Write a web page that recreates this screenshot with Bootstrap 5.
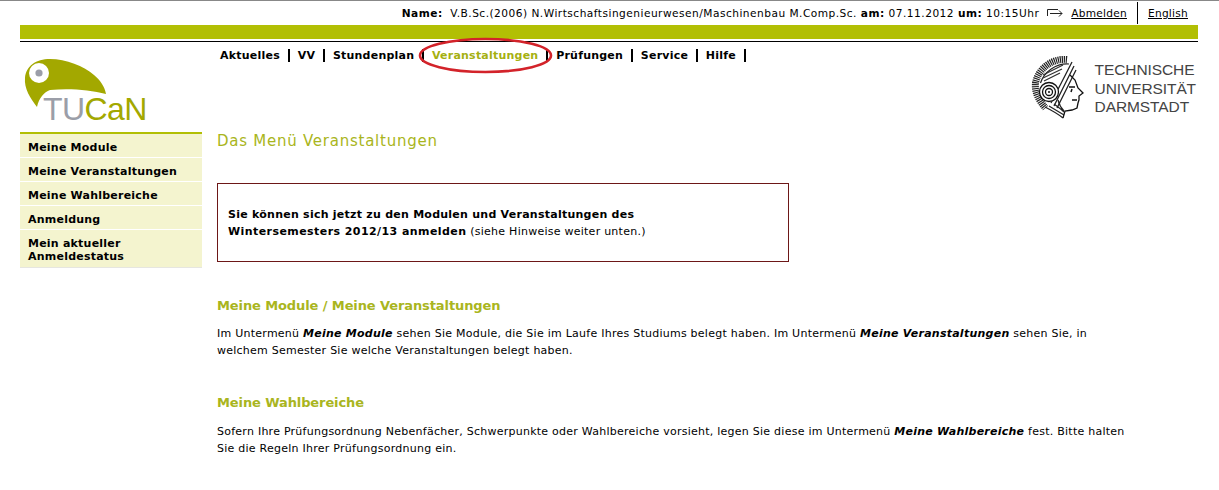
<!DOCTYPE html>
<html lang="de">
<head>
  <meta charset="UTF-8" />
  <meta name="viewport" content="width=device-width, initial-scale=1.0"/>
  <title>TUCaN</title>
  <link href="https://cdn.jsdelivr.net/npm/bootstrap@5.3.3/dist/css/bootstrap.min.css" rel="stylesheet"/>
  <style>
    body { font-family: "DejaVu Sans", Verdana, sans-serif; font-size: 11px; color: #000; background: #fff; border-top: 1px solid #888; overflow: hidden; }
    a { color: #000; }
    .top-meta { height: 24px; padding: 1px 31px 0 0; font-size: 10.6px; letter-spacing: .48px; }
    .top-meta b { letter-spacing: .5px; }
    .top-meta a { letter-spacing: .25px; }
    .top-sep { border-left: 1px solid #000; height: 22px; margin: -1px 10px 0; }
    .olive-bar { height: 14px; background: #b2bf04; margin: 0 21px 0 20px; }
    .black-rule { height: 1px; background: #000; margin: 2px 21px 0 20px; }
    .head-row { height: 90px; margin: 0 21px 0 20px; position: relative; }
    .logo-col { width: 197px; }
    .logo-name { font-family: "Liberation Sans", Arial, sans-serif; font-size: 32px; letter-spacing: -.6px; }
    .main-nav { font-weight: 700; font-size: 11px; letter-spacing: .22px; padding-top: 7px; line-height: 14px; }
    .main-nav a { text-decoration: none; padding: 0 7.75px 0 8px; border-right: 2px solid #000; }
    .main-nav a:first-child { padding-left: 3px; }
    .main-nav a.active { color: #a5b011; }
    .red-ring { position: absolute; left: 398px; top: -5px; width: 135px; height: 37px; }
    .tu-logo { margin: 14px 2px 0 0; gap: 10px; }
    .tu-name { font-family: "Liberation Sans", Arial, sans-serif; font-size: 15.5px; line-height: 18.5px; color: #444; letter-spacing: -.1px; padding-top: 5px; }
    .body-row { margin: 0 21px 0 20px; }
    .side-menu { width: 182px; flex: none; border-top: 2px solid #b2bf04; }
    .side-menu a { display: block; background: #f4f4cf; border-bottom: 1px solid #fff; padding: 7px 8px 3px; line-height: 13px; font-weight: 700; letter-spacing: .22px; text-decoration: none; }
    .side-menu a:last-child { border-bottom: 1px solid #e6e6e0; padding-bottom: 4px; }
    .page-body { margin-left: 15px; width: 918px; line-height: 17px; letter-spacing: .25px; }
    .page-title { color: #a9b520; font-size: 15px; line-height: 18px; margin: 0 0 33px; font-weight: 400; letter-spacing: .75px; }
    .notice-box { width: 572px; height: 79px; border: 1px solid #6d1717; padding: 22px 10px 0; margin-bottom: 36px; }
    .second-line { letter-spacing: .43px; }
    .sub-title { color: #a9b520; font-size: 13px; line-height: 16px; font-weight: 700; margin: 0 0 11px; letter-spacing: -.1px; }
    .sub-title-wide { margin-bottom: 12px; }
    .page-body p { margin: 0 0 36px; }
    .page-body i { font-weight: 700; }
  </style>
</head>
<body>
  <div class="top-meta d-flex justify-content-end align-items-center">
    <span><b>Name:</b>&nbsp; V.B.Sc.(2006) N.Wirtschaftsingenieurwesen/Maschinenbau M.Comp.Sc. <b>am:</b> 07.11.2012 <b>um:</b> 10:15Uhr</span>
    <svg class="ms-2 me-2" width="16" height="9" viewBox="0 0 16 9"><path d="M.5 7V.5H11M3 4.5H15M12 1.5l3 3-3 3" fill="none" stroke="#222" stroke-width="1"/></svg>
    <a href="#">Abmelden</a>
    <span class="top-sep"></span>
    <a href="#">English</a>
  </div>
  <div class="olive-bar"></div>
  <div class="black-rule"></div>

  <div class="head-row d-flex">
    <div class="logo-col">
      <svg width="130" height="70" viewBox="0 0 130 70" class="mt-3 ms-1" role="img">
        <path d="M1 20C2 8 12 1 26 1 42 1 60 8 70 17 76 22 81 29 82 36 66 32 46 30 26 32 20 34 15 40 13 49 6 40 0 30 1 20Z" fill="#a3a800"/>
        <circle cx="15" cy="15" r="10" fill="#fff"/>
        <circle cx="15" cy="15" r="3.6" fill="#9b9ea8"/>
        <text x="19" y="62" class="logo-name" fill="#9b9ea8">TU<tspan fill="#a3a800">CaN</tspan></text>
      </svg>
    </div>
    <nav class="main-nav flex-grow-1 align-self-start">
      <a href="#">Aktuelles</a><a href="#">VV</a><a href="#">Stundenplan</a><a href="#" class="active">Veranstaltungen</a><a href="#">Prüfungen</a><a href="#">Service</a><a href="#">Hilfe</a>
    </nav>
    <svg class="red-ring" viewBox="0 0 135 37"><ellipse cx="67.5" cy="18.5" rx="65.5" ry="16.5" fill="none" stroke="#d3232a" stroke-width="2.6"/></svg>
    <div class="tu-logo d-flex align-items-start">
      <svg width="54" height="64" viewBox="6 6 54 64" role="img">
        <path d="M43 6C26 5 9 16 7 33c-1 9 4 21 14 28l6 6 11 2 1-8 8-1 5-2 2-6-1-3 1-2 5-2-5-8-3-8-6-7Z" fill="#fff"/>
        <path d="M42 9.500C27 8 13 19 10.500 33c-1 9 3 17 10 25" fill="none" stroke="#222" stroke-width="7" stroke-dasharray="1.2 .8"/>
        <path d="M44 14C31 13 19 22 15.500 33" fill="none" stroke="#222" stroke-width="1.200"/>
        <path d="M47 12 26 53M49 16 29 56M51 20 32 58" fill="none" stroke="#222" stroke-width="1.300"/>
        <path d="M18 25 38 15M18 28 37 19M19 31 35 23" fill="none" stroke="#333" stroke-width="1.300"/>
        <circle cx="24" cy="42" r="9.500" fill="#fff" stroke="#111" stroke-width="1.300"/>
        <circle cx="24" cy="42" r="6.500" fill="none" stroke="#111" stroke-width="1.300"/>
        <circle cx="24" cy="42" r="3.500" fill="none" stroke="#111" stroke-width="1.300"/>
        <circle cx="24" cy="42" r="1" fill="#111"/>
        <path d="M20 57c6 3 12 6 18 11M24 56c5 3 10 6 15 9M29 54c4 3 7 5 10 8M33 50c1 4 3 8 6 11" fill="none" stroke="#222" stroke-width="1.200"/>
        <path d="M45 25 50 30 53 38 58 43 54 46 54 50 53 53 52 58 47 60 40 61 38 68" fill="none" stroke="#111" stroke-width="1.300"/>
        <path d="M44 37h6M47 39l-1 3M47 50h5" fill="none" stroke="#111" stroke-width="1.500"/>
      </svg>
      <div class="tu-name">TECHNISCHE<br>UNIVERSITÄT<br>DARMSTADT</div>
    </div>
  </div>

  <div class="body-row d-flex align-items-start">
    <div class="side-menu">
      <a href="#">Meine Module</a>
      <a href="#">Meine Veranstaltungen</a>
      <a href="#">Meine Wahlbereiche</a>
      <a href="#">Anmeldung</a>
      <a href="#">Mein aktueller<br>Anmeldestatus</a>
    </div>
    <div class="page-body">
      <h1 class="page-title">Das Menü Veranstaltungen</h1>
      <div class="notice-box">
        <b>Sie können sich jetzt zu den Modulen und Veranstaltungen des<br><span class="second-line">Wintersemesters 2012/13 anmelden</span></b> (siehe Hinweise weiter unten.)
      </div>
      <h2 class="sub-title">Meine Module / Meine Veranstaltungen</h2>
      <p>Im Untermenü <i>Meine Module</i> sehen Sie Module, die Sie im Laufe Ihres Studiums belegt haben. Im Untermenü <i>Meine Veranstaltungen</i> sehen Sie, in welchem Semester Sie welche Veranstaltungen belegt haben.</p>
      <h2 class="sub-title sub-title-wide">Meine Wahlbereiche</h2>
      <p>Sofern Ihre Prüfungsordnung Nebenfächer, Schwerpunkte oder Wahlbereiche vorsieht, legen Sie diese im Untermenü <i>Meine Wahlbereiche</i> fest. Bitte halten Sie die Regeln Ihrer Prüfungsordnung ein.</p>
    </div>
  </div>

  <script src="https://cdn.jsdelivr.net/npm/bootstrap@5.3.3/dist/js/bootstrap.bundle.min.js"></script>
</body>
</html>
